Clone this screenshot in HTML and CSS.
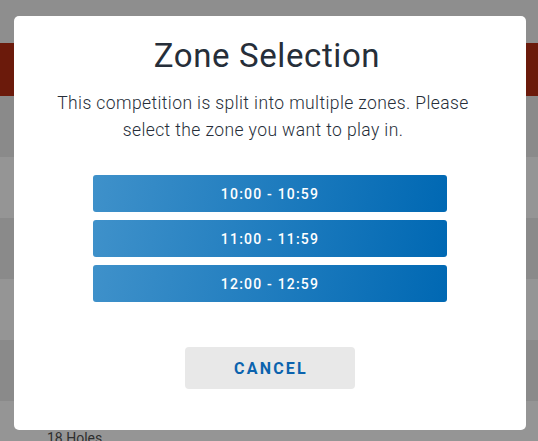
FILE: index.html
```html
<!DOCTYPE html>
<html>
<head>
<meta charset="utf-8">
<link rel="stylesheet" href="styles.css">
</head>
<body>
<div class="page">
  <div class="band band-top"></div>
  <div class="band band-red"></div>
  <div class="band row-dark"></div>
  <div class="band row-light"></div>
  <div class="band row-dark"></div>
  <div class="band row-light"></div>
  <div class="band row-dark"></div>
  <div class="band row-light last"><span class="holes">18 Holes</span></div>
</div>
<div class="modal">
  <h1 class="title">Zone Selection</h1>
  <p class="desc">This competition is split into multiple zones. Please select the zone you want to play in.</p>
  <div class="zones">
    <button class="zone">10:00 - 10:59</button>
    <button class="zone">11:00 - 11:59</button>
    <button class="zone">12:00 - 12:59</button>
  </div>
  <button class="cancel">CANCEL</button>
</div>
</body>
</html>
```
FILE: styles.css
```css
html, body {
  margin: 0;
  padding: 0;
  width: 538px;
  height: 441px;
  overflow: hidden;
  font-family: Roboto, "Liberation Sans", sans-serif;
}
.page {
  display: flex;
  flex-direction: column;
  height: 441px;
}
.band { height: 61px; flex: none; }
.band-top { height: 43px; background: #8e8e8e; }
.band-red { height: 53px; background: #6b1a0b; }
.row-dark { background: #8a8a8a; }
.row-light { background: #959595; }
.last { height: 40px; padding-left: 47px; box-sizing: border-box; }
.holes {
  display: block;
  padding-top: 29px;
  font-size: 14px;
  line-height: 16px;
  color: #2e2e2e;
}
.modal {
  position: absolute;
  left: 14px;
  top: 16px;
  width: 512px;
  height: 414px;
  box-sizing: border-box;
  background: #fff;
  border-radius: 5px;
  padding-top: 20px;
  display: flex;
  flex-direction: column;
  align-items: center;
}
.title {
  margin: 0 6px 0 0;
  font-size: 33px;
  line-height: 40px;
  font-weight: 400;
  letter-spacing: 0.6px;
  color: #262e39;
}
.desc {
  margin: 14px 14px 0 0;
  width: 440px;
  text-align: center;
  font-size: 17.5px;
  line-height: 27px;
  font-weight: 300;
  letter-spacing: 0.4px;
  color: #262e39;
}
.zones {
  margin-top: 31px;
  display: flex;
  flex-direction: column;
  gap: 8px;
}
.zone {
  width: 354px;
  height: 37px;
  border: none;
  border-radius: 3px;
  background: linear-gradient(100deg, #3f91ca 0%, #0068b3 100%);
  color: #fff;
  font-family: Roboto, sans-serif;
  font-size: 14px;
  font-weight: 500;
  letter-spacing: 1.2px;
  padding: 0;
}
.cancel {
  margin-top: 45px;
  width: 170px;
  height: 42px;
  border: none;
  border-radius: 4px;
  background: #e8e8e8;
  color: #0b63ae;
  font-family: Roboto, sans-serif;
  font-size: 16px;
  font-weight: 700;
  letter-spacing: 2.2px;
  padding: 0 0 0 2px;
}
```
